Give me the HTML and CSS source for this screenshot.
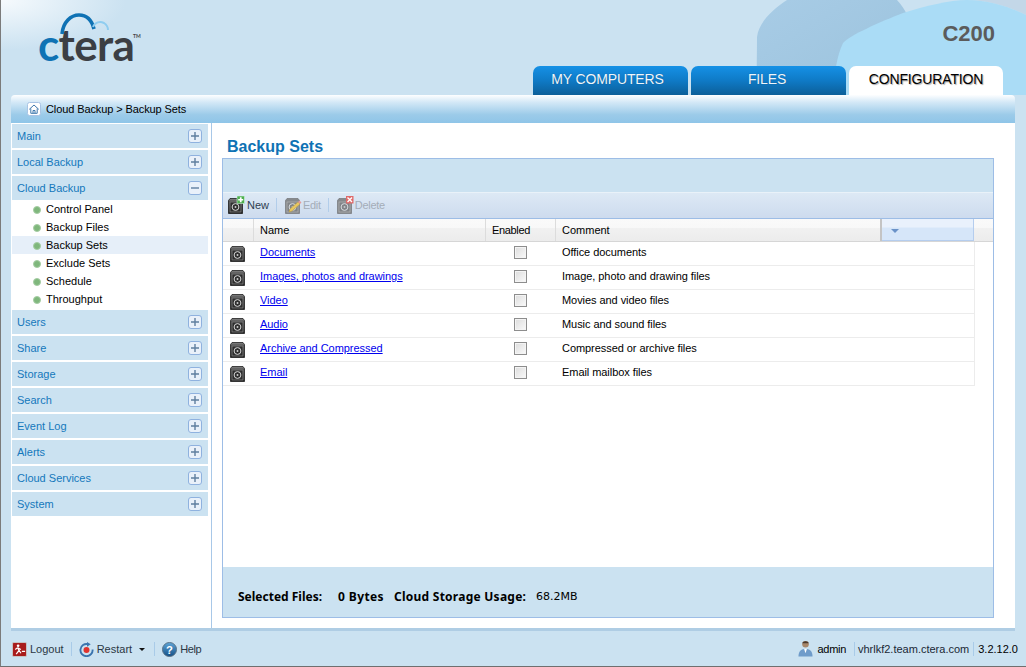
FILE: index.html
```html
<!DOCTYPE html>
<html lang="en">
<head>
<meta charset="utf-8">
<title>CTERA C200 - Backup Sets</title>
<link rel="stylesheet" href="styles.css">
</head>
<body>
<svg class="defs" width="0" height="0" aria-hidden="true">
  <defs>
    <linearGradient id="camBody" x1="0" y1="0" x2="0" y2="1">
      <stop offset="0" stop-color="#8a8a8a"/><stop offset=".22" stop-color="#4a4a4a"/><stop offset="1" stop-color="#1c1c1c"/>
    </linearGradient>
    <linearGradient id="blob" x1="0" y1="0" x2="1" y2="1">
      <stop offset="0" stop-color="#a8cce6"/><stop offset=".6" stop-color="#a0c6e0"/><stop offset="1" stop-color="#94b4cc"/>
    </linearGradient>
    <linearGradient id="ball" x1="0" y1="0" x2="0" y2="1">
      <stop offset="0" stop-color="#5fa6d8"/><stop offset="1" stop-color="#134f86"/>
    </linearGradient>
    <symbol id="disc" viewBox="0 0 15 16">
      <path d="M2 .5h11l1.500 2V15.500H.5V2.500z" fill="url(#camBody)" stroke="#1e1e1e" stroke-width=".8"/>
      <rect x="2" y="4" width="11" height="10" fill="#2e2e2e" stroke="#8c8c8c" stroke-width=".7"/>
      <circle cx="7.500" cy="9" r="3.400" fill="none" stroke="#d8d8d8" stroke-width="1"/>
      <circle cx="7.500" cy="9" r="1" fill="#ccc"/>
    </symbol>
    <symbol id="discpale" viewBox="0 0 15 16">
      <path d="M2 .5h11l1.500 2V15.500H.5V2.500z" fill="#86898c" stroke="#7a7c80" stroke-width=".8"/>
      <rect x="2" y="4" width="11" height="10" fill="#808387" stroke="#b5b5b5" stroke-width=".7"/>
      <circle cx="7.500" cy="9" r="3.400" fill="none" stroke="#d8dce0" stroke-width="1"/>
      <circle cx="7.500" cy="9" r="1" fill="#c5c8cc"/>
    </symbol>
    <symbol id="plus" viewBox="0 0 14 14">
      <rect x=".5" y=".5" width="13" height="13" rx="2.500" fill="#e9f1fa" stroke="#8fb2df"/>
      <path d="M3 7h8M7 3v8" stroke="#5f7f9f" stroke-width="1.400" fill="none"/>
    </symbol>
    <symbol id="minus" viewBox="0 0 14 14">
      <rect x=".5" y=".5" width="13" height="13" rx="2.500" fill="#e9f1fa" stroke="#8fb2df"/>
      <path d="M3 7h8" stroke="#5f7f9f" stroke-width="1.400" fill="none"/>
    </symbol>
  </defs>
</svg>

<div class="app">
  <header class="top">
    <svg class="swoosh" viewBox="0 0 276 95" width="276" height="95" aria-hidden="true">
      <path d="M217 0C240 0 262 8 276 15V0z" fill="#c3d7e8"/>
      <path d="M8 95C6 80 7 60 7 37C9 22 22 10 37 0H147C156 10 162 22 162 33C162 60 130 95 110 95z" fill="url(#blob)"/>
      <path d="M85 95C84 80 85 60 93 43C100 35 130 22 153 13C175 6 200 0 217 0C240 0 262 8 276 15V95z" fill="#aadcf6"/>
    </svg>
    <div class="logo">
      <svg class="logo-arc" viewBox="0 0 60 24" width="60" height="24" aria-hidden="true">
        <path d="M3 22C4 10 12 3 20 3C28 3 33 9 35 17" fill="none" stroke="#0f72b4" stroke-width="3.600"/>
        <path d="M34 15C36 10 41 9 45 11C48 13 49 15 49 18" fill="none" stroke="#8fcdf0" stroke-width="2"/>
      </svg>
      <span class="logo-c">c</span><span class="logo-rest">tera</span><span class="logo-tm">TM</span>
    </div>
    <div class="model">C200</div>
    <nav class="tabs">
      <a class="tab tab-first">MY COMPUTERS</a>
      <a class="tab tab-mid">FILES</a>
      <a class="tab tab-active">CONFIGURATION</a>
    </nav>
  </header>

  <div class="crumb">
    <span class="home">
      <svg viewBox="0 0 14 14" width="14" height="14" aria-hidden="true">
        <rect x=".5" y=".5" width="13" height="13" rx="2" fill="#fff" stroke="#a9c4e4"/>
        <path d="M2.200 7.400L7 3l4.800 4.400M3.800 6.500V11.300H10.200V6.500M6 11.300V8.500H8V11.300" fill="none" stroke="#3f78ad" stroke-width="1"/>
      </svg>
    </span>
    <span>Cloud Backup &gt; Backup Sets</span>
  </div>

  <div class="body">
    <aside class="side">
      <div class="group"><span>Main</span><svg class="tog"><use href="#plus"/></svg></div>
      <div class="group"><span>Local Backup</span><svg class="tog"><use href="#plus"/></svg></div>
      <div class="group"><span>Cloud Backup</span><svg class="tog"><use href="#minus"/></svg></div>
      <ul class="subs">
        <li>Control Panel</li>
        <li>Backup Files</li>
        <li class="cur">Backup Sets</li>
        <li>Exclude Sets</li>
        <li>Schedule</li>
        <li>Throughput</li>
      </ul>
      <div class="group"><span>Users</span><svg class="tog"><use href="#plus"/></svg></div>
      <div class="group"><span>Share</span><svg class="tog"><use href="#plus"/></svg></div>
      <div class="group"><span>Storage</span><svg class="tog"><use href="#plus"/></svg></div>
      <div class="group"><span>Search</span><svg class="tog"><use href="#plus"/></svg></div>
      <div class="group"><span>Event Log</span><svg class="tog"><use href="#plus"/></svg></div>
      <div class="group"><span>Alerts</span><svg class="tog"><use href="#plus"/></svg></div>
      <div class="group"><span>Cloud Services</span><svg class="tog"><use href="#plus"/></svg></div>
      <div class="group"><span>System</span><svg class="tog"><use href="#plus"/></svg></div>
    </aside>

    <main class="content">
      <h1 class="title">Backup Sets</h1>
      <section class="panel">
        <div class="band"></div>
        <div class="toolbar">
          <button class="tool">
            <svg class="ticon" viewBox="0 0 18 18" aria-hidden="true">
              <use href="#disc" x="1" y="2" width="15" height="16"/>
              <rect x="10" y="0" width="7.500" height="7.500" fill="#4fae4f" stroke="#dfe" stroke-width=".5"/>
              <path d="M13.750 1.200v5M11.200 3.750h5" stroke="#fff" stroke-width="1.700"/>
            </svg>New
          </button>
          <i class="tsep"></i>
          <button class="tool off">
            <svg class="ticon" viewBox="0 0 18 18" aria-hidden="true">
              <use href="#discpale" x="1" y="2" width="15" height="16"/>
              <path d="M5 16l1-3 8-7 2 2-8 7z" fill="#e8c860" stroke="#b89a40" stroke-width=".5"/>
              <path d="M14 6l1.500-1.500 2 2L16 8z" fill="#e39a9a"/>
            </svg>Edit
          </button>
          <i class="tsep"></i>
          <button class="tool off">
            <svg class="ticon" viewBox="0 0 18 18" aria-hidden="true">
              <use href="#discpale" x="1" y="2" width="15" height="16"/>
              <rect x="10" y="0" width="7.500" height="7.500" fill="#df6a6a"/>
              <path d="M11.500 1.500l4.500 4.500M16 1.500l-4.500 4.500" stroke="#fff" stroke-width="1.400"/>
            </svg>Delete
          </button>
        </div>

        <div class="thead">
          <div class="th"></div>
          <div class="th">Name</div>
          <div class="th th-en">Enabled</div>
          <div class="th">Comment</div>
          <div class="th th-sort"><i class="arrow"></i></div>
          <div class="th"></div>
        </div>

        <div class="rows">
          <div class="row"><svg class="disc"><use href="#disc"/></svg><a href="#">Documents</a><span class="chk"></span><span class="cmt">Office documents</span></div>
          <div class="row"><svg class="disc"><use href="#disc"/></svg><a href="#">Images, photos and drawings</a><span class="chk"></span><span class="cmt">Image, photo and drawing files</span></div>
          <div class="row"><svg class="disc"><use href="#disc"/></svg><a href="#">Video</a><span class="chk"></span><span class="cmt">Movies and video files</span></div>
          <div class="row"><svg class="disc"><use href="#disc"/></svg><a href="#">Audio</a><span class="chk"></span><span class="cmt">Music and sound files</span></div>
          <div class="row"><svg class="disc"><use href="#disc"/></svg><a href="#">Archive and Compressed</a><span class="chk"></span><span class="cmt">Compressed or archive files</span></div>
          <div class="row"><svg class="disc"><use href="#disc"/></svg><a href="#">Email</a><span class="chk"></span><span class="cmt">Email mailbox files</span></div>
        </div>

        <div class="usage">
          <b class="u1">Selected Files:</b><b class="u2">0 Bytes</b><b class="u3">Cloud Storage Usage:</b><span class="u4">68.2MB</span>
        </div>
      </section>
    </main>
  </div>
  <div class="strip"></div>

  <footer class="foot">
    <div class="foot-left">
      <span class="fitem">
        <svg viewBox="0 0 16 16" width="15" height="15" aria-hidden="true">
          <rect x=".5" y=".5" width="15" height="15" rx="1.500" fill="#a81c1c" stroke="#c9c9c9"/>
          <circle cx="6.500" cy="4" r="1.400" fill="#fff"/>
          <path d="M6 6l-2.500 2M6 6l1.500 3-3 4M7.500 9l2 3M6.500 6.500l3 1.500M10.500 10h3.500" stroke="#fff" stroke-width="1.300" fill="none"/>
        </svg>Logout
      </span>
      <i class="fsep fsep-a"></i>
      <span class="fitem">
        <svg viewBox="0 0 16 16" width="15" height="15" aria-hidden="true">
          <path d="M9.500 2.300A6.500 6.500 0 1 0 14.500 8" fill="none" stroke="#3a74ae" stroke-width="2"/>
          <path d="M8.500 0l4 2.500-4 2.500z" fill="#3a74ae"/>
          <circle cx="8" cy="8.500" r="3.200" fill="#e0332e"/>
        </svg>Restart<i class="caret"></i>
      </span>
      <i class="fsep fsep-b"></i>
      <span class="fitem fhelp">
        <svg viewBox="0 0 16 16" width="15" height="15" aria-hidden="true">
          <circle cx="8" cy="8" r="7.500" fill="url(#ball)" stroke="#5a6f82"/>
          <text x="8" y="12.300" text-anchor="middle" class="qmark">?</text>
        </svg>Help
      </span>
    </div>
    <div class="foot-right">
      <span class="fuser">
        <svg viewBox="0 0 16 18" width="15" height="17" aria-hidden="true">
          <circle cx="8" cy="4.500" r="3.500" fill="#a8876a"/>
          <path d="M4.500 3.500C5 .5 11 .5 11.500 3.500z" fill="#4a3a2e"/>
          <path d="M.5 17.500C.5 11 4 9.500 8 9.500S15.500 11 15.500 17.500z" fill="#6f9cca"/>
          <path d="M6.500 9.500L8 14l1.500-4.500z" fill="#fff"/>
        </svg>admin
      </span>
      <i class="fsep fsep-c"></i>
      <span class="host">vhrlkf2.team.ctera.com</span>
      <i class="fsep fsep-d"></i>
      <span>3.2.12.0</span>
    </div>
  </footer>
</div>
</body>
</html>
```

FILE: styles.css
```css
* { box-sizing: border-box; }
html, body { margin: 0; padding: 0; }
body {
  width: 1026px;
  height: 667px;
  overflow: hidden;
  background: #cbe2f1;
  font-family: "Liberation Sans", Arial, sans-serif;
  font-size: 11px;
  color: #000;
}
.defs { position: absolute; }

.app {
  width: 1026px;
  height: 667px;
  display: flex;
  flex-direction: column;
  border-left: 1px solid #7b7b7b;
  border-bottom: 1px solid #6f6f6f;
  background: radial-gradient(ellipse 125px 50px at 0 0, #f6fafd 0%, #cbe2f1 100%);
}

/* Header */
.top {
  position: relative;
  height: 95px;
  flex: none;
  display: flex;
  justify-content: flex-end;
  align-items: flex-end;
  padding-right: 23px;
}
.swoosh { position: absolute; right: 0; top: 0; }
.logo {
  position: absolute;
  left: 37px;
  top: 22px;
  font-family: Lato, "Open Sans", sans-serif;
  font-weight: 700;
  font-size: 44px;
  line-height: 44px;
  letter-spacing: -.6px;
  white-space: nowrap;
}
.logo-arc { position: absolute; left: 21px; top: -10px; }
.logo-c { color: #0f72b4; }
.logo-rest { color: #3c3f44; }
.logo-tm {
  position: absolute;
  left: 95px;
  top: 11px;
  font-size: 5px;
  line-height: 6px;
  letter-spacing: 0;
  color: #444;
}
.model {
  position: absolute;
  right: 31px;
  top: 21px;
  font-size: 22px;
  line-height: 25px;
  font-weight: 700;
  color: #5b5b5b;
}
.tabs { position: relative; display: flex; gap: 3px; }
.tab {
  width: 155px;
  height: 29px;
  border-radius: 7px 7px 0 0;
  text-align: center;
  font-size: 14px;
  line-height: 26px;
  letter-spacing: -.15px;
  color: #eef6fc;
  text-shadow: 0 0 1px rgba(0, 40, 80, .5);
  background: linear-gradient(#1591e6 0%, #0f7ac6 50%, #0c5f99 100%);
}
.tab-first { padding-right: 6px; }
.tab-mid { padding-right: 3px; }
.tab-active { width: 154px; background: #fff; color: #000; text-shadow: 1px 1px 1px rgba(0, 0, 0, .35); }

/* Breadcrumb */
.crumb {
  flex: none;
  height: 28px;
  margin: 0 10px;
  width: 1004px;
  display: flex;
  align-items: center;
  gap: 5px;
  padding-left: 16px;
  letter-spacing: -.1px;
  border-radius: 4px 4px 0 0;
  background: linear-gradient(#fdfeff 0%, #d5e9f7 25%, #9ccbe9 70%, #8fc5e8 100%);
}
.home { display: flex; }

/* Main area */
.body {
  flex: none;
  height: 505px;
  width: 1004px;
  margin-left: 10px;
  display: flex;
  background: #fff;
}
.side {
  width: 201px;
  flex: none;
  padding: 1px 3px 0 1px;
  border-right: 1px solid #a8c8e8;
}
.group {
  height: 24px;
  margin-bottom: 2px;
  padding: 0 6px 0 5px;
  display: flex;
  align-items: center;
  justify-content: space-between;
  background: #cbe2f1;
  color: #1478bc;
}
.tog { width: 14px; height: 14px; }
.subs { list-style: none; margin: -2px 0 0; padding: 0 0 2px; }
.subs li {
  height: 18px;
  line-height: 18px;
  padding-left: 34px;
  position: relative;
}
.subs li::before {
  content: "";
  position: absolute;
  left: 21px;
  top: 6px;
  width: 6px;
  height: 6px;
  border-radius: 50%;
  background: #7fb77c;
  border: 1px solid #a6cda4;
}
.subs .cur { background: #e6eff9; }

.content { flex: 1; padding: 0 21px 0 10px; min-width: 0; }
.title {
  margin: 14px 0 0 5px;
  height: 21px;
  font-size: 16px;
  line-height: 19px;
  font-weight: 700;
  color: #0f72b4;
}
.panel {
  height: 460px;
  border: 1px solid #9dbde6;
  display: flex;
  flex-direction: column;
  background: #fff;
}
.band { height: 33px; flex: none; background: #cbe2f1; }
.toolbar {
  flex: none;
  height: 27px;
  display: flex;
  align-items: center;
  gap: 7px;
  padding: 0 4px 2px;
  border-top: 1px solid #e9f2f9;
  border-bottom: 1px solid #9dbde6;
  background: linear-gradient(#dde9f5, #cddbee);
}
.tool {
  display: flex;
  align-items: center;
  gap: 2px;
  padding: 0;
  border: 0;
  background: none;
  font: inherit;
  font-size: 11px;
  color: #2d3e50;
}
.tool.off { color: #a4adb8; gap: 1px; letter-spacing: -.3px; }
.ticon { width: 18px; height: 18px; }
.tsep { width: 1px; height: 14px; background: #b2cdea; }

.thead {
  flex: none;
  height: 23px;
  display: grid;
  grid-template-columns: 31px 232px 70px 326px 92px 1fr;
  background: linear-gradient(#fafafa 0%, #f8f8f8 40%, #f1f1f1 41%, #ececec 100%);
  border-bottom: 1px solid #d6d6d6;
}
.th {
  padding: 0 0 0 6px;
  line-height: 22px;
  border-right: 1px solid #dcdcdc;
  white-space: nowrap;
}
.th-en { letter-spacing: -.35px; }
.th:last-child { border-right: 0; }
.th:nth-child(4) { border-right: 2px solid #c4c4c4; }
.th-sort {
  position: relative;
  background: linear-gradient(#e9f1fc 0%, #e9f1fc 40%, #d6e6f9 41%);
  border-right: 1px solid #b5cdee;
  border-bottom: 1px solid #b5cdee;
}
.arrow {
  position: absolute;
  left: 9px;
  top: 10px;
  border-left: 4px solid transparent;
  border-right: 4px solid transparent;
  border-top: 4px solid #6a92c8;
}

.rows { flex: 1; width: 752px; }
.row {
  height: 24px;
  display: grid;
  grid-template-columns: 31px 232px 70px 1fr;
  align-items: center;
  border-bottom: 1px solid #ececec;
  border-right: 1px solid #ececec;
}
.cmt { padding-left: 6px; margin-bottom: 3px; letter-spacing: -.06px; }
.row a {
  color: #00e;
  text-decoration: underline;
  justify-self: start;
  margin: 0 0 3px 6px;
  letter-spacing: -.04px;
}
.disc { width: 15px; height: 16px; margin: 1px 0 0 7px; }
.chk {
  width: 13px;
  height: 13px;
  margin: 0 0 3px 28px;
  border: 1px solid #8d8d8d;
  background: linear-gradient(135deg, #dcdcdc, #fafafa);
  box-shadow: inset 0 0 0 1px #f4f4f4;
}

.usage {
  flex: none;
  height: 50px;
  padding: 8px 0 0 15px;
  display: flex;
  align-items: center;
  background: #cbe2f1;
  font-family: "Noto Sans", sans-serif;
  font-size: 12px;
  white-space: nowrap;
}
.u1 { width: 100px; }
.u2 { width: 56px; letter-spacing: .4px; }
.u3 { width: 142px; letter-spacing: .25px; }
.u4 { font-family: "DejaVu Sans", sans-serif; font-size: 11px; font-weight: 400; }

.strip { flex: none; height: 3px; margin-left: 10px; width: 1004px; background: #afcde4; }

/* Footer */
.foot {
  flex: 1;
  display: flex;
  justify-content: space-between;
  align-items: center;
  padding: 1px 8px 0 11px;
  color: #2a3743;
}
.foot-left, .foot-right { display: flex; align-items: center; }
.foot-right { color: #000; margin-top: -1px; }
.fitem { display: flex; align-items: center; gap: 3px; }
.fhelp { letter-spacing: -.4px; }
.fsep { width: 1px; height: 14px; background: #a9cbe8; }
.fsep-a { margin: 0 7px 0 7px; }
.fsep-b { margin: 0 7px 0 9px; }
.fsep-c { margin: 0 3px 0 8px; }
.fsep-d { margin: 0 4px 0 4px; }
.caret {
  margin-left: 4px;
  border-left: 3px solid transparent;
  border-right: 3px solid transparent;
  border-top: 3px solid #111;
}
.qmark { font-size: 12px; font-weight: 700; fill: #fff; font-family: "Liberation Sans", sans-serif; letter-spacing: 0; }
.host { color: #1a2835; }
.fuser { display: flex; align-items: center; gap: 5px; letter-spacing: -.3px; }
```
